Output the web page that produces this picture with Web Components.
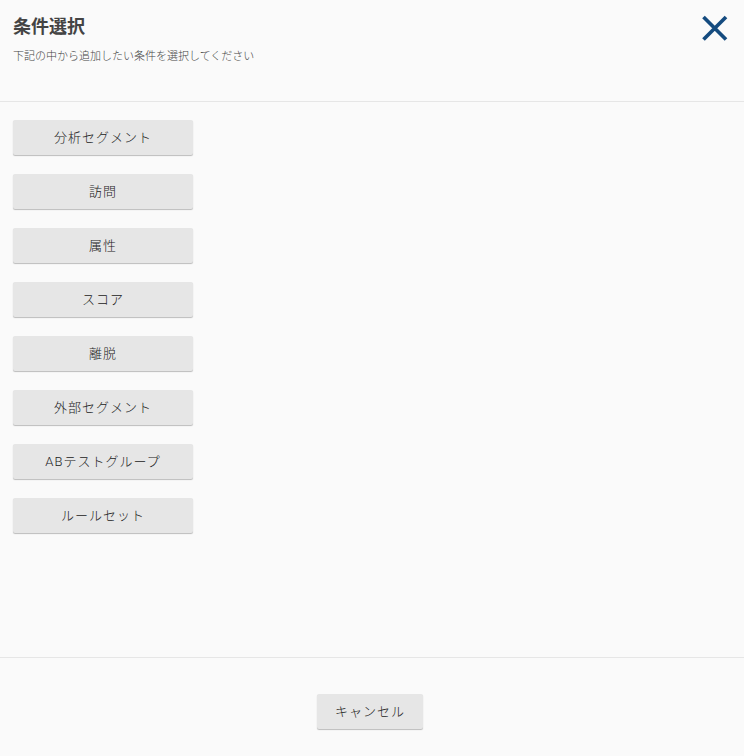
<!DOCTYPE html>
<html lang="ja">
<head>
<meta charset="utf-8">
<title>条件選択</title>
<style>
  html, body { margin: 0; height: 100%; background: #fafafa; }
  body { font-family: Roboto, "Noto Sans CJK JP", sans-serif; color: #333; }
</style>
</head>
<body>
<condition-dialog>
  <span slot="title">条件選択</span>
  <span slot="subtitle">下記の中から追加したい条件を選択してください</span>
  <flat-button>分析セグメント</flat-button>
  <flat-button>訪問</flat-button>
  <flat-button>属性</flat-button>
  <flat-button>スコア</flat-button>
  <flat-button>離脱</flat-button>
  <flat-button>外部セグメント</flat-button>
  <flat-button>ABテストグループ</flat-button>
  <flat-button>ルールセット</flat-button>
  <flat-button slot="footer" width="106">キャンセル</flat-button>
</condition-dialog>

<script>
const buttonTemplate = document.createElement('template')
buttonTemplate.innerHTML = `
<style>
  :host {
    display: flex;
    align-items: center;
    justify-content: center;
    box-sizing: border-box;
    width: var(--button-width, 180px);
    height: 35px;
    padding-bottom: 3px;
    background: #e6e6e6;
    border-radius: 2px;
    box-shadow: 0 1px 1px rgba(0, 0, 0, .25);
    font-size: 13px;
    font-weight: 300;
    letter-spacing: 1px;
    color: #222;
    cursor: pointer;
  }
</style>
<slot></slot>
`

class FlatButton extends HTMLElement {
  constructor () {
    super()
    this.attachShadow({ mode: 'open' })
    this.shadowRoot.appendChild(buttonTemplate.content.cloneNode(true))
  }

  connectedCallback () {
    const width = this.getAttribute('width')
    if (width) this.style.setProperty('--button-width', width + 'px')
  }
}

const dialogTemplate = document.createElement('template')
dialogTemplate.innerHTML = `
<style>
  :host {
    display: flex;
    flex-direction: column;
    height: 756px;
    overflow: hidden;
  }
  header {
    box-sizing: border-box;
    height: 102px;
    padding: 17px 13px 0;
    display: flex;
    justify-content: space-between;
    align-items: flex-start;
    border-bottom: 1px solid #e6e6e6;
  }
  h1 {
    margin: 0;
    font-size: 18px;
    line-height: 20px;
    font-weight: 700;
    color: #444;
  }
  p {
    margin: 13px 0 0;
    font-size: 11px;
    line-height: 14px;
    font-weight: 300;
    color: #444;
  }
  .close {
    width: 26px;
    height: 26px;
    margin: -2px 3px 0 0;
    padding: 0;
    border: 0;
    background: none;
  }
  .close svg { display: block; }
  main {
    box-sizing: border-box;
    height: 555px;
    padding: 18px 13px 0;
    display: flex;
    flex-direction: column;
    align-items: flex-start;
    gap: 19px;
  }
  footer {
    flex: 1;
    padding: 36px 4px 0 0;
    display: flex;
    justify-content: center;
    align-items: flex-start;
    border-top: 1px solid #e6e6e6;
  }
</style>
<header>
  <div>
    <h1><slot name="title"></slot></h1>
    <p><slot name="subtitle"></slot></p>
  </div>
  <button class="close" aria-label="close">
    <svg width="26" height="26" viewBox="0 0 26 26">
      <path d="M1.5 2 L24 24.5 M24 2 L1.5 24.5" stroke="#144b7f" stroke-width="3.7" fill="none"/>
    </svg>
  </button>
</header>
<main><slot></slot></main>
<footer><slot name="footer"></slot></footer>
`

class ConditionDialog extends HTMLElement {
  constructor () {
    super()
    this.attachShadow({ mode: 'open' })
    this.shadowRoot.appendChild(dialogTemplate.content.cloneNode(true))
  }
}

window.customElements.define('flat-button', FlatButton)
window.customElements.define('condition-dialog', ConditionDialog)
</script>
</body>
</html>
